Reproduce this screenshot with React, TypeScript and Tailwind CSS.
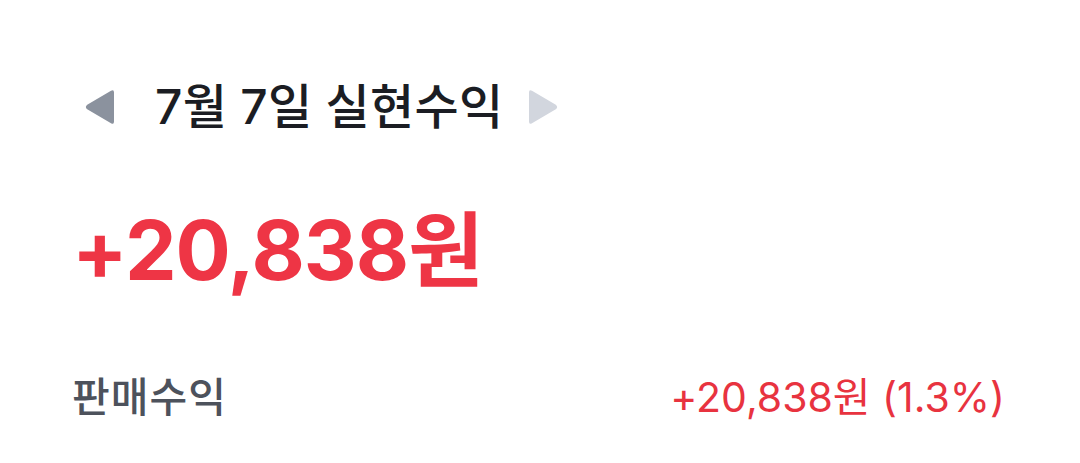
import React from "react";

const FONT = { fontFamily: '"Inter", "Noto Sans CJK KR", sans-serif' };

function Caret({ dir, color }: { dir: "left" | "right"; color: string }) {
  // rounded play-style triangle
  const d =
    dir === "left"
      ? "M29 3.5 L29 32.5 Q29 36 26 34.2 L2.2 20.3 Q-0.5 18 2.2 15.7 L26 1.8 Q29 0 29 3.5 Z"
      : "M1 3.5 L1 32.5 Q1 36 4 34.2 L27.8 20.3 Q30.5 18 27.8 15.7 L4 1.8 Q1 0 1 3.5 Z";
  return (
    <svg width="30" height="36" viewBox="0 0 30 36" aria-hidden>
      <path d={d} fill={color} />
    </svg>
  );
}

export default function App() {
  return (
    <div className="h-[463px] w-[1080px] bg-white" style={FONT}>
      <div className="pl-[72px] pr-[75px] pt-[78px]">
        <div className="flex items-center">
          <button className="ml-[13px] flex h-[58px] items-center">
            <Caret dir="left" color="#8b929e" />
          </button>
          <h1 className="ml-[40px] text-[48px] font-medium leading-[58px] tracking-[0.3px] text-[#1b1d23]">
            7월 7일 실현수익
          </h1>
          <button className="ml-[25px] flex h-[58px] items-center">
            <Caret dir="right" color="#d2d6de" />
          </button>
        </div>

        <div className="mt-[70px] text-[82px] font-bold leading-[90px] tracking-[-1px] text-[#ee3545]">
          +20,838원
        </div>

        <div className="mt-[75px] flex items-center justify-between text-[41px] leading-[52px]">
          <span className="font-medium tracking-[1px] text-[#4d525c]">판매수익</span>
          <span className="text-[#e8333f]">+20,838원 (1.3%)</span>
        </div>
      </div>
    </div>
  );
}
